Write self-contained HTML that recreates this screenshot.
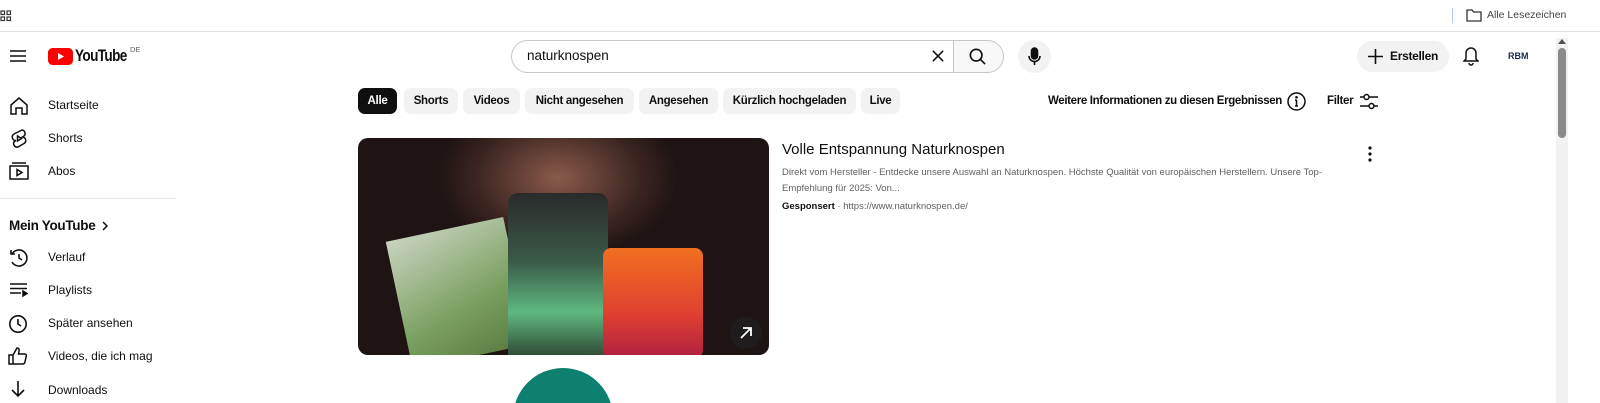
<!DOCTYPE html>
<html style="width:1600px;height:403px;overflow:hidden"><head><style>
*{margin:0;padding:0;box-sizing:border-box}
body{width:1600px;height:403px;overflow:hidden;background:#fff;font-family:"Liberation Sans",Arial,sans-serif;color:#0f0f0f;position:relative}
.a{position:absolute;white-space:nowrap}
.topbar{left:0;top:0;width:1600px;height:32px;border-bottom:1px solid #e3e3e3}
.nav{font-size:12px;color:#0f0f0f}
.chip{position:absolute;top:88px;height:26px;border-radius:7px;background:#f2f2f2;font-size:11.5px;font-weight:bold;line-height:26px;text-align:center;color:#0f0f0f;letter-spacing:-0.3px;white-space:nowrap}
svg{position:absolute}
.b{font-weight:bold;letter-spacing:-0.3px}
</style></head><body>
<div class="a topbar"></div>
<svg style="left:0;top:10px" width="12" height="12" viewBox="0 0 12 12" fill="none" stroke="#333" stroke-width="1.2"><rect x="1" y="1" width="3.5" height="3.5"/><rect x="7" y="1" width="3.5" height="3.5"/><rect x="1" y="7" width="3.5" height="3.5"/><rect x="7" y="7" width="3.5" height="3.5"/></svg>
<div class="a" style="left:1452px;top:8px;width:1px;height:15px;background:#a8c7fa"></div>
<svg style="left:1466px;top:9px" width="16" height="13" viewBox="0 0 16 13" fill="none" stroke="#333" stroke-width="1.3"><path d="M1 1h5l1.5 2H15v9H1z"/></svg>
<div class="a" style="left:1487px;top:9px;font-size:10.5px;color:#444">Alle Lesezeichen</div>

<svg style="left:10px;top:49px" width="16" height="14" viewBox="0 0 16 14" stroke="#0f0f0f" stroke-width="1.6"><path d="M0 2h16M0 7h16M0 12h16"/></svg>
<svg style="left:48px;top:48px" width="25" height="18" viewBox="0 0 25 18"><rect width="25" height="17" rx="4.5" fill="#f00"/><path d="M10 5l6 3.5-6 3.5z" fill="#fff"/></svg>
<div class="a" style="left:75px;top:46px;font-size:17px;font-weight:bold;letter-spacing:-0.8px;transform:scaleX(.8);transform-origin:left">YouTube</div>
<div class="a" style="left:130px;top:45px;font-size:7.5px;color:#606060">DE</div>

<div class="a" style="left:511px;top:40px;width:443px;height:33px;border:1px solid #c6c6c6;border-radius:17px 0 0 17px;border-right:none"></div>
<div class="a" style="left:527px;top:48px;font-size:13.5px">naturknospen</div>
<svg style="left:932px;top:50px" width="12" height="12" viewBox="0 0 14 14" stroke="#0f0f0f" stroke-width="1.8"><path d="M1 1l12 12M13 1L1 13"/></svg>
<div class="a" style="left:953px;top:40px;width:51px;height:33px;border:1px solid #c6c6c6;border-radius:0 17px 17px 0;background:#f8f8f8"></div>
<svg style="left:969px;top:48px" width="17" height="17" viewBox="0 0 19 19" fill="none" stroke="#0f0f0f" stroke-width="1.8"><circle cx="8" cy="8" r="6.5"/><path d="M12.8 12.8L18 18"/></svg>
<div class="a" style="left:1018px;top:40px;width:33px;height:33px;border-radius:50%;background:#f2f2f2"></div>
<svg style="left:1028px;top:47px" width="13" height="19" viewBox="0 0 13 19" fill="none" stroke="#0f0f0f" stroke-width="1.6"><rect x="3.5" y="1" width="6" height="11" rx="3" fill="#0f0f0f"/><path d="M1 9a5.5 5.5 0 0011 0M6.5 14.5V18"/></svg>

<div class="a" style="left:1357px;top:41px;width:92px;height:31px;border-radius:16px;background:#f2f2f2"></div>
<svg style="left:1367px;top:48px" width="17" height="17" viewBox="0 0 17 17" stroke="#0f0f0f" stroke-width="1.6"><path d="M8.5 1v15M1 8.5h15"/></svg>
<div class="a b" style="left:1390px;top:49px;font-size:12px">Erstellen</div>
<svg style="left:1463px;top:46px" width="16" height="20" viewBox="0 0 16 20" fill="none" stroke="#0f0f0f" stroke-width="1.5"><path d="M8 2a5 5 0 00-5 5v6l-2 2h14l-2-2V7a5 5 0 00-5-5zM6 17a2 2 0 004 0"/></svg>
<div class="a" style="left:1508px;top:51px;font-size:9px;font-weight:bold;color:#1a2a4a">RBM</div>
<div class="a" style="left:1556px;top:38px;width:12px;height:365px;background:#f1f1f1"></div>
<div class="a" style="left:1558px;top:48px;width:8px;height:90px;border-radius:4px;background:#8a8a8a"></div>
<svg style="left:1558px;top:38px" width="8" height="6" viewBox="0 0 8 6"><path d="M0 6L4 1l4 5z" fill="#505050"/></svg>

<svg style="left:9px;top:96px" width="20" height="20" viewBox="0 0 20 20" fill="none" stroke="#0f0f0f" stroke-width="1.5"><path d="M2 9L10 2l8 7v9h-5v-6H7v6H2z"/></svg>
<div class="a nav" style="left:48px;top:98px">Startseite</div>
<svg style="left:9px;top:128px" width="20" height="20" viewBox="0 0 20 20" fill="none" stroke="#0f0f0f" stroke-width="1.5"><path d="M13 2l-8 4a3.5 3.5 0 002 6.5l-1.5.8A3.5 3.5 0 009 19l6-3.5a3.5 3.5 0 00-1.5-6.5l1-.6A3.5 3.5 0 0013 2z"/><path d="M8.5 8v5l4-2.5z"/></svg>
<div class="a nav" style="left:48px;top:131px">Shorts</div>
<svg style="left:9px;top:161px" width="20" height="20" viewBox="0 0 20 20" fill="none" stroke="#0f0f0f" stroke-width="1.5"><path d="M3 2h14M1 5h18v13H1z"/><path d="M8 8.5v6l5-3z"/></svg>
<div class="a nav" style="left:48px;top:164px">Abos</div>
<div class="a" style="left:0;top:198px;width:176px;height:1px;background:#e5e5e5"></div>
<div class="a" style="left:9px;top:218px;font-size:13.5px;font-weight:bold;letter-spacing:-0.3px">Mein YouTube</div>
<svg style="left:102px;top:221px" width="7" height="10" viewBox="0 0 7 10" fill="none" stroke="#0f0f0f" stroke-width="1.5"><path d="M1 1l4 4-4 4"/></svg>
<svg style="left:9px;top:248px" width="20" height="20" viewBox="0 0 20 20" fill="none" stroke="#0f0f0f" stroke-width="1.6"><path d="M3 6a8 8 0 110 8M2 2v4h4M10 6v4l3 2"/></svg>
<div class="a nav" style="left:48px;top:250px">Verlauf</div>
<svg style="left:10px;top:283px" width="18" height="14" viewBox="0 0 18 14" stroke="#0f0f0f" stroke-width="1.5"><path d="M0 1h17M0 5.5h17M0 10h11"/><path d="M13 8v5l4-2.5z" fill="#0f0f0f"/></svg>
<div class="a nav" style="left:48px;top:283px">Playlists</div>
<svg style="left:8px;top:314px" width="20" height="20" viewBox="0 0 20 20" fill="none" stroke="#0f0f0f" stroke-width="1.6"><circle cx="10" cy="10" r="8.2"/><path d="M10 5v5l3 2"/></svg>
<div class="a nav" style="left:48px;top:316px">Später ansehen</div>
<svg style="left:8px;top:346px" width="20" height="20" viewBox="0 0 20 20" fill="none" stroke="#0f0f0f" stroke-width="1.5"><path d="M1 9h4v9H1zM5 9l4-7c2 0 2.5 1.5 2 3.5L10.5 8H17c1 0 1.5 1 1.3 2l-1.5 6.5c-.3 1-1 1.5-2 1.5H5"/></svg>
<div class="a nav" style="left:48px;top:349px">Videos, die ich mag</div>
<svg style="left:10px;top:380px" width="16" height="18" viewBox="0 0 16 18" fill="none" stroke="#0f0f0f" stroke-width="1.6"><path d="M8 1v15M2 10l6 6 6-6"/></svg>
<div class="a nav" style="left:48px;top:383px">Downloads</div>

<div class="chip" style="left:358px;width:39px;background:#0f0f0f;color:#fff">Alle</div>
<div class="chip" style="left:404px;width:54px">Shorts</div>
<div class="chip" style="left:463px;width:57px">Videos</div>
<div class="chip" style="left:525px;width:109px">Nicht angesehen</div>
<div class="chip" style="left:639px;width:79px">Angesehen</div>
<div class="chip" style="left:723px;width:133px">Kürzlich hochgeladen</div>
<div class="chip" style="left:861px;width:39px">Live</div>
<div class="a b" style="left:1048px;top:95px;font-size:11.5px;letter-spacing:-0.35px">Weitere Informationen zu diesen Ergebnissen</div>
<svg style="left:1287px;top:92px" width="19" height="19" viewBox="0 0 19 19" fill="none" stroke="#0f0f0f" stroke-width="1.5"><circle cx="9.5" cy="9.5" r="8.5"/><path d="M9.5 8v6M8 14h3M8 8h1.5"/><circle cx="9.5" cy="5.3" r=".6" fill="#0f0f0f"/></svg>
<div class="a b" style="left:1327px;top:95px;font-size:11.5px">Filter</div>
<svg style="left:1360px;top:93px" width="18" height="17" viewBox="0 0 18 17" fill="none" stroke="#0f0f0f" stroke-width="1.5"><path d="M0 4h4M9 4h9M0 13h9M14 13h4"/><circle cx="6.5" cy="4" r="2.5"/><circle cx="11.5" cy="13" r="2.5"/></svg>

<div class="a" style="left:358px;top:138px;width:411px;height:217px;border-radius:10px;overflow:hidden;background:radial-gradient(ellipse 120px 80px at 200px 40px,#8a5a4a,#3a2420 70%,#1e1414)">
  <div class="a" style="left:40px;top:90px;width:120px;height:130px;background:linear-gradient(160deg,#c9d3c0,#7aa060 60%,#5a7a40);transform:rotate(-12deg)"></div>
  <div class="a" style="left:150px;top:55px;width:100px;height:170px;border-radius:10px;background:linear-gradient(180deg,#2a2a2a,#3a5a48 40%,#5fb880 70%,#2a3a2a)"></div>
  <div class="a" style="left:245px;top:110px;width:100px;height:110px;border-radius:8px;background:linear-gradient(180deg,#f07020,#e04030 60%,#b02040)"></div>
  <div class="a" style="left:372px;top:179px;width:32px;height:32px;border-radius:50%;background:rgba(30,30,30,.8)"></div>
  <svg style="left:381px;top:188px" width="14" height="14" viewBox="0 0 14 14" fill="none" stroke="#fff" stroke-width="1.8"><path d="M2 12L12 2M4 2h8v8"/></svg>
</div>
<div class="a" style="left:782px;top:141px;font-size:15px">Volle Entspannung Naturknospen</div>
<div class="a" style="left:782px;top:165px;width:540px;font-size:9.5px;line-height:15.5px;color:#606060;white-space:normal">Direkt vom Hersteller - Entdecke unsere Auswahl an Naturknospen. Höchste Qualität von europäischen Herstellern. Unsere Top-Empfehlung für 2025: Von...</div>
<div class="a" style="left:782px;top:201px;font-size:9.5px;color:#606060"><b style="color:#0f0f0f">Gesponsert</b> · https://www.naturknospen.de/</div>
<svg style="left:1367px;top:146px" width="6" height="16" viewBox="0 0 6 16" fill="#0f0f0f"><circle cx="3" cy="2" r="1.6"/><circle cx="3" cy="8" r="1.6"/><circle cx="3" cy="14" r="1.6"/></svg>
<div class="a" style="left:513px;top:368px;width:100px;height:35px;overflow:hidden"><div style="width:100px;height:100px;border-radius:50%;background:#0e8070"></div></div>
</body></html>
